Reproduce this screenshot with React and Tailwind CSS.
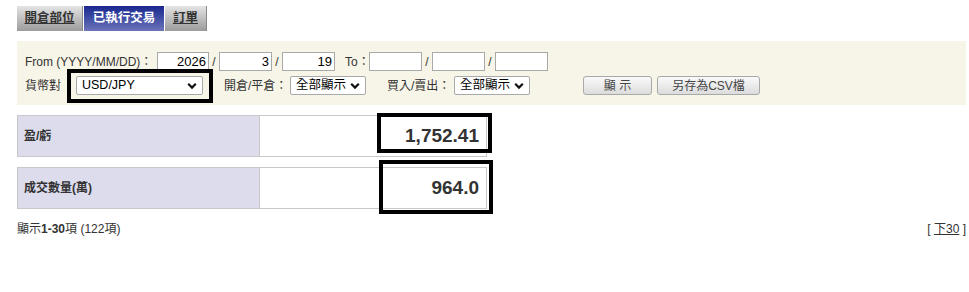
import React from "react";

const font = { fontFamily: '"Liberation Sans", Arial, "Noto Sans CJK TC", sans-serif' };

function Chevron() {
  return (
    <svg width="10" height="8" viewBox="0 0 10 8" className="shrink-0">
      <path d="M1.2 1.8 L5 5.6 L8.8 1.8" fill="none" stroke="#111" strokeWidth="2.2" />
    </svg>
  );
}

function Select({ value, width }) {
  return (
    <div
      className={`h-[19px] ${width} bg-white border border-[#a9a9a9] rounded-[2px] flex items-center justify-between pl-[5px] pr-[5px] text-[12.5px] text-black`}
    >
      <span>{value}</span>
      <Chevron />
    </div>
  );
}

function DateBox({ value, width }) {
  return (
    <div
      className={`h-[19px] ${width} bg-white border border-[#a9a9a9] flex items-center justify-end pr-[2px] text-[13px] text-black`}
    >
      {value}
    </div>
  );
}

function Button({ children, width }) {
  return (
    <div
      className={`h-[19px] ${width} rounded-[3px] border border-[#a9a9a9] bg-gradient-to-b from-[#fafafa] to-[#dcdcdc] flex items-center justify-center text-[12px] text-[#444]`}
    >
      {children}
    </div>
  );
}

function SummaryRow({ label, value, boxClass }) {
  return (
    <div className="relative w-[470px] h-[42px] border border-[#c8c8c8] flex">
      <div className="w-[242px] bg-[#dcdcec] border-r border-[#c8c8c8] flex items-center pl-[6px] text-[12px] font-bold text-[#333]">
        {label}
      </div>
      <div className="flex-1 bg-white flex items-center justify-end pr-[7px] text-[19px] font-bold text-[#333]">
        {value}
      </div>
      <div className={`absolute border-[4px] border-black ${boxClass}`} />
    </div>
  );
}

export default function App() {
  return (
    <div className="w-[969px] h-[292px] bg-white text-[12px] text-[#333]" style={font}>
      {/* tabs */}
      <div className="flex pl-[17px] pt-[6px] gap-[1px]">
        <div className="h-[25px] w-[66px] bg-gradient-to-b from-[#e4e4e4] to-[#9c9c9c] border-r border-[#888] flex items-center justify-center">
          <span className="underline font-bold text-[#333] text-[12.5px]">開倉部位</span>
        </div>
        <div className="h-[25px] w-[80px] bg-gradient-to-b from-[#1c2590] to-[#6d74b8] flex items-center justify-center">
          <span className="font-bold text-white text-[12.5px]">已執行交易</span>
        </div>
        <div className="h-[25px] w-[42px] bg-gradient-to-b from-[#e4e4e4] to-[#9c9c9c] border-r border-[#888] flex items-center justify-center">
          <span className="underline font-bold text-[#333] text-[12.5px]">訂單</span>
        </div>
      </div>

      {/* filter panel */}
      <div className="ml-[17px] mr-[3px] mt-[10px] h-[64px] bg-[#f7f5e8] pl-[8px] pt-[11px]">
        <div className="flex items-center h-[19px]">
          <span className="w-[132px]">From (YYYY/MM/DD)：</span>
          <DateBox value="2026" width="w-[52px]" />
          <span className="w-[10px] text-center">/</span>
          <DateBox value="3" width="w-[53px]" />
          <span className="w-[10px] text-center">/</span>
          <DateBox value="19" width="w-[53px]" />
          <span className="ml-[10px] w-[24px]">To：</span>
          <DateBox value="" width="w-[53px]" />
          <span className="w-[10px] text-center">/</span>
          <DateBox value="" width="w-[53px]" />
          <span className="w-[10px] text-center">/</span>
          <DateBox value="" width="w-[53px]" />
        </div>
        <div className="flex items-center h-[19px] mt-[5px]">
          <span className="w-[51px]">貨幣對</span>
          <div className="relative">
            <Select value="USD/JPY" width="w-[127px]" />
            <div className="absolute -left-[9px] -top-[7px] w-[146px] h-[34px] border-[4px] border-black" />
          </div>
          <span className="ml-[21px] w-[66px]">開倉/平倉：</span>
          <Select value="全部顯示" width="w-[76px]" />
          <span className="ml-[21px] w-[67px]">買入/賣出：</span>
          <Select value="全部顯示" width="w-[76px]" />
          <div className="ml-[53px]">
            <Button width="w-[69px]">顯 示</Button>
          </div>
          <div className="ml-[5px]">
            <Button width="w-[103px]">另存為CSV檔</Button>
          </div>
        </div>
      </div>

      {/* summary */}
      <div className="ml-[17px] mt-[10px] flex flex-col gap-[10px]">
        <SummaryRow
          label="盈/虧"
          value="1,752.41"
          boxClass="left-[359px] -top-[3px] w-[115px] h-[40px]"
        />
        <SummaryRow
          label="成交數量(萬)"
          value="964.0"
          boxClass="left-[361px] -top-[8px] w-[114px] h-[54px]"
        />
      </div>

      {/* footer */}
      <div className="ml-[17px] mr-[3px] mt-[11px] flex justify-between text-[12px] text-[#333]">
        <span>
          顯示<b>1-30</b>項 (122項)
        </span>
        <span>
          [ <span className="underline">下30</span> ]
        </span>
      </div>
    </div>
  );
}
